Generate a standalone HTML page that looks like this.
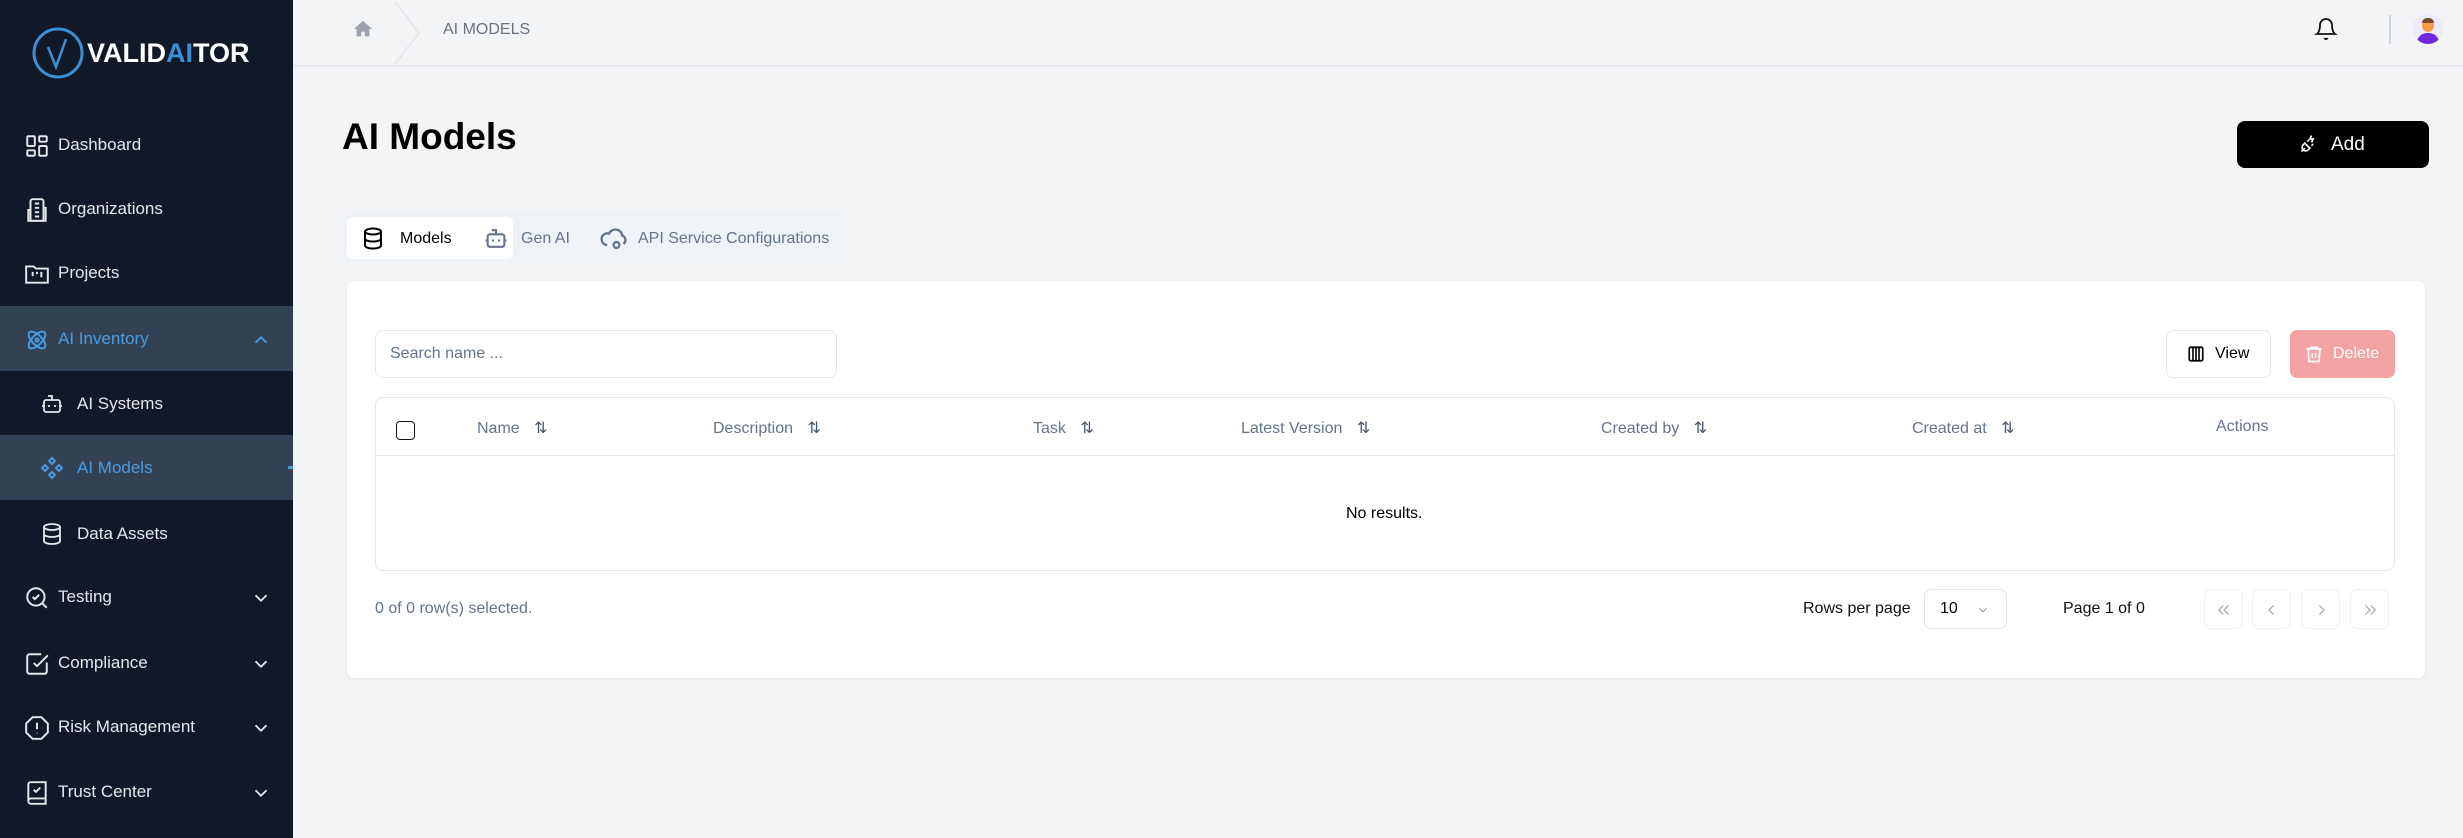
<!DOCTYPE html>
<html><head><meta charset="utf-8"><style>
*{box-sizing:border-box;margin:0;padding:0}
body{width:2463px;height:838px;overflow:hidden;background:#f3f4f6;font-family:"Liberation Sans",sans-serif;position:relative}
.a{position:absolute}
.side{left:0;top:0;width:293px;height:838px;background:#111827}
.nav{position:absolute;left:0;width:293px;height:64px;display:flex;align-items:center;color:#e5e7eb;font-size:17px}
.nav svg{position:absolute;left:24px;top:20px}
.nav span{position:absolute;left:58px}
.nav.sub svg{left:40px}
.nav.sub span{left:77px}
.nav .ch{left:250px;top:22px}
.txt{font-size:16px;color:#111}
.th{position:absolute;top:418px;font-size:16px;color:#64748b}
.pb{position:absolute;top:589px;width:39px;height:40px;border:1px solid #eef0f3;border-radius:7px}
.pb svg{position:absolute;left:10px;top:11px}
</style></head><body>
<div class="a side"></div>
<svg class="a" style="left:30px;top:25px" width="56" height="56" viewBox="0 0 56 56"><circle cx="28" cy="28" r="24" fill="none" stroke="#3b8fd4" stroke-width="3"/><path d="M18 22 L26 42 L36 14" fill="none" stroke="#3b8fd4" stroke-width="2.5"/></svg>
<div class="a" style="left:87px;top:38px;font-size:27px;font-weight:bold;color:#fff">VALID<span style="color:#3b8fd4">AI</span>TOR</div>

<div class="nav" style="top:113px"><svg width="26" height="26" viewBox="0 0 24 24" fill="none" stroke="#e5e7eb" stroke-width="1.8"><rect x="3" y="3" width="7" height="9" rx="1"/><rect x="14" y="3" width="7" height="5" rx="1"/><rect x="14" y="12" width="7" height="9" rx="1"/><rect x="3" y="16" width="7" height="5" rx="1"/></svg><span>Dashboard</span></div>
<div class="nav" style="top:177px"><svg width="26" height="26" viewBox="0 0 24 24" fill="none" stroke="#e5e7eb" stroke-width="1.8"><path d="M6 22V4a2 2 0 0 1 2-2h8a2 2 0 0 1 2 2v18Z"/><path d="M6 12H4v10h16V10h-2M10 6h4M10 10h4M10 14h4M10 18h4"/></svg><span>Organizations</span></div>
<div class="nav" style="top:241px"><svg width="26" height="26" viewBox="0 0 24 24" fill="none" stroke="#e5e7eb" stroke-width="1.8"><path d="M2 5h7l2 2h11v13H2Z"/><path d="M8 10v4M12 10v2M16 10v5"/></svg><span>Projects</span></div>
<div class="a" style="left:0;top:306px;width:293px;height:65px;background:#334155"></div>
<div class="nav" style="top:307px;color:#4a9ae0"><svg width="26" height="26" viewBox="0 0 24 24" fill="none" stroke="#4a9ae0" stroke-width="1.8"><circle cx="12" cy="12" r="1.5"/><ellipse cx="12" cy="12" rx="10" ry="4.5" transform="rotate(45 12 12)"/><ellipse cx="12" cy="12" rx="10" ry="4.5" transform="rotate(-45 12 12)"/></svg><span>AI Inventory</span><svg class="ch" width="22" height="22" viewBox="0 0 24 24" fill="none" stroke="#4a9ae0" stroke-width="2"><path d="M6 15l6-6 6 6"/></svg></div>
<div class="nav sub" style="top:372px"><svg width="24" height="24" viewBox="0 0 24 24" fill="none" stroke="#e5e7eb" stroke-width="1.8"><path d="M12 8V4H8"/><rect x="4" y="8" width="16" height="12" rx="2"/><path d="M2 14h2M20 14h2M9 13v2M15 13v2"/></svg><span>AI Systems</span></div>
<div class="a" style="left:0;top:435px;width:293px;height:65px;background:#334155"></div>
<div class="a" style="left:288px;top:466px;width:5px;height:3px;background:#4a9ae0"></div>
<div class="nav sub" style="top:436px;color:#4a9ae0"><svg width="24" height="24" viewBox="0 0 24 24" fill="none" stroke="#4a9ae0" stroke-width="2"><path d="M12 2l3 3-3 3-3-3ZM5 9l3 3-3 3-3-3ZM19 9l3 3-3 3-3-3ZM12 16l3 3-3 3-3-3Z"/></svg><span>AI Models</span></div>
<div class="nav sub" style="top:502px"><svg width="24" height="24" viewBox="0 0 24 24" fill="none" stroke="#e5e7eb" stroke-width="1.8"><ellipse cx="12" cy="5" rx="8" ry="3"/><path d="M4 5v14c0 1.7 3.6 3 8 3s8-1.3 8-3V5M4 12c0 1.7 3.6 3 8 3s8-1.3 8-3"/></svg><span>Data Assets</span></div>
<div class="nav" style="top:565px"><svg width="26" height="26" viewBox="0 0 24 24" fill="none" stroke="#e5e7eb" stroke-width="1.8"><circle cx="11" cy="11" r="8"/><path d="M21 21l-4.3-4.3M8 11l2 2 4-4"/></svg><span>Testing</span><svg class="ch" width="22" height="22" viewBox="0 0 24 24" fill="none" stroke="#e5e7eb" stroke-width="2"><path d="M6 9l6 6 6-6"/></svg></div>
<div class="nav" style="top:631px"><svg width="26" height="26" viewBox="0 0 24 24" fill="none" stroke="#e5e7eb" stroke-width="1.8"><path d="M21 10.5V19a2 2 0 0 1-2 2H5a2 2 0 0 1-2-2V5a2 2 0 0 1 2-2h11M9 11l3 3L22 4"/></svg><span>Compliance</span><svg class="ch" width="22" height="22" viewBox="0 0 24 24" fill="none" stroke="#e5e7eb" stroke-width="2"><path d="M6 9l6 6 6-6"/></svg></div>
<div class="nav" style="top:695px"><svg width="26" height="26" viewBox="0 0 24 24" fill="none" stroke="#e5e7eb" stroke-width="1.8"><path d="M7.9 2h8.2L22 7.9v8.2L16.1 22H7.9L2 16.1V7.9Z"/><path d="M12 7v6M12 16.5v.5"/></svg><span>Risk Management</span><svg class="ch" width="22" height="22" viewBox="0 0 24 24" fill="none" stroke="#e5e7eb" stroke-width="2"><path d="M6 9l6 6 6-6"/></svg></div>
<div class="nav" style="top:760px"><svg width="26" height="26" viewBox="0 0 24 24" fill="none" stroke="#e5e7eb" stroke-width="1.8"><path d="M4 19.5V4a2 2 0 0 1 2-2h14v20H6.5A2.5 2.5 0 0 1 4 19.5Zm0 0A2.5 2.5 0 0 1 6.5 17H20M9 9l2 2 4-4"/></svg><span>Trust Center</span><svg class="ch" width="22" height="22" viewBox="0 0 24 24" fill="none" stroke="#e5e7eb" stroke-width="2"><path d="M6 9l6 6 6-6"/></svg></div>

<div class="a" style="left:293px;top:0;width:2170px;height:66px;background:#f3f4f6;border-bottom:1px solid #e5e7eb;box-shadow:0 1px 3px rgba(0,0,0,.05)"></div>
<svg class="a" style="left:352px;top:18px" width="22" height="22" viewBox="0 0 24 24"><path d="M12 3L2 12h3v8h5v-5h4v5h5v-8h3Z" fill="#9ca3af"/></svg>
<svg class="a" style="left:393px;top:0" width="30" height="66"><path d="M2 2L26 33 2 64" fill="none" stroke="#e2e4e8" stroke-width="1.5"/></svg>
<div class="a" style="left:443px;top:21px;font-size:16px;color:#6b7280">AI MODELS</div>
<svg class="a" style="left:2314px;top:16px" width="24" height="26" viewBox="0 0 24 24" fill="none" stroke="#111" stroke-width="1.8"><path d="M6 8a6 6 0 0 1 12 0c0 7 3 9 3 9H3s3-2 3-9M10.3 21a1.9 1.9 0 0 0 3.4 0"/></svg>
<div class="a" style="left:2389px;top:15px;width:2px;height:29px;background:#d1d5db"></div>
<div class="a" style="left:2413px;top:14px;width:30px;height:30px;border-radius:50%;background:#ede9fe;overflow:hidden">
<div class="a" style="left:9px;top:5px;width:12px;height:13px;border-radius:50%;background:#f59e42"></div>
<div class="a" style="left:9px;top:4px;width:12px;height:5px;border-radius:6px 6px 0 0;background:#7c4a2d"></div>
<div class="a" style="left:4px;top:19px;width:22px;height:14px;border-radius:10px 10px 0 0;background:#6d28d9"></div></div>

<div class="a" style="left:342px;top:116px;font-size:37px;font-weight:bold;color:#000">AI Models</div>
<div class="a" style="left:2237px;top:121px;width:192px;height:47px;background:#000;border-radius:8px;color:#fff;font-size:19px;line-height:47px;padding-left:94px"><svg class="a" style="left:62px;top:13px" width="20" height="20" viewBox="0 0 24 24" fill="none" stroke="#fff" stroke-width="2"><path d="M3 21l4-4M7 11l6 6-2 2a4 4 0 0 1-6-6ZM10 9l2-2M15 14l2-2M15 2l-2 4h4l-2 4"/></svg>Add</div>

<div class="a" style="left:343px;top:213px;width:505px;height:50px;background:#eff2f6;border-radius:8px"></div>
<div class="a" style="left:347px;top:217px;width:166px;height:42px;background:#fff;border-radius:6px"></div>
<svg class="a" style="left:361px;top:226px" width="24" height="25" viewBox="0 0 24 24" fill="none" stroke="#000" stroke-width="2"><ellipse cx="12" cy="5" rx="8" ry="3"/><path d="M4 5v14c0 1.7 3.6 3 8 3s8-1.3 8-3V5M4 12c0 1.7 3.6 3 8 3s8-1.3 8-3"/></svg>
<div class="a txt" style="left:400px;top:230px;color:#000">Models</div>
<svg class="a" style="left:483px;top:226px" width="26" height="25" viewBox="0 0 24 24" fill="none" stroke="#64748b" stroke-width="2"><path d="M12 8V4H8"/><rect x="4" y="8" width="16" height="12" rx="2"/><path d="M2 14h2M20 14h2M9 13v2M15 13v2"/></svg>
<div class="a txt" style="left:521px;top:230px;color:#64748b">Gen AI</div>
<svg class="a" style="left:599px;top:224px" width="28" height="28" viewBox="0 0 24 24" fill="none" stroke="#64748b" stroke-width="2"><path d="M7 18a5 5 0 1 1 1.6-9.8A6 6 0 0 1 20 10a4 4 0 0 1 1 7"/><circle cx="15" cy="18" r="2.5"/></svg>
<div class="a txt" style="left:638px;top:230px;color:#64748b">API Service Configurations</div>

<div class="a" style="left:347px;top:281px;width:2078px;height:397px;background:#fff;border-radius:7px;box-shadow:0 1px 3px rgba(0,0,0,.08)"></div>
<div class="a" style="left:375px;top:330px;width:462px;height:48px;border:1px solid #e2e8f0;border-radius:8px;font-size:16px;color:#64748b;padding:14px 0 0 14px">Search name ...</div>
<div class="a" style="left:2166px;top:330px;width:105px;height:48px;border:1px solid #e2e8f0;border-radius:7px;font-size:16px;color:#000;line-height:46px;padding-left:48px"><svg class="a" style="left:20px;top:14px" width="18" height="18" viewBox="0 0 24 24" fill="none" stroke="#000" stroke-width="2.2"><rect x="3" y="3" width="18" height="18" rx="2"/><path d="M8 3v18M12 3v18M16 3v18"/></svg>View</div>
<div class="a" style="left:2290px;top:330px;width:105px;height:48px;background:#f4a3a3;border-radius:7px;font-size:16px;color:#fff;line-height:48px;padding-left:43px"><svg class="a" style="left:14px;top:14px" width="20" height="20" viewBox="0 0 24 24" fill="none" stroke="#fff" stroke-width="2"><path d="M3 6h18M8 6V4h8v2M5 6l1 15h12l1-15M10 11v6M14 11v6"/></svg>Delete</div>

<div class="a" style="left:375px;top:397px;width:2020px;height:174px;border:1px solid #e5e7eb;border-radius:8px"></div>
<div class="a" style="left:376px;top:455px;width:2018px;height:1px;background:#e5e7eb"></div>
<div class="a" style="left:396px;top:421px;width:19px;height:19px;border:1.5px solid #111;border-radius:4px"></div>
<div class="th" style="left:477px">Name <span style="margin-left:10px;color:#475569">⇅</span></div>
<div class="th" style="left:713px">Description <span style="margin-left:10px;color:#475569">⇅</span></div>
<div class="th" style="left:1033px">Task <span style="margin-left:10px;color:#475569">⇅</span></div>
<div class="th" style="left:1241px">Latest Version <span style="margin-left:10px;color:#475569">⇅</span></div>
<div class="th" style="left:1601px">Created by <span style="margin-left:10px;color:#475569">⇅</span></div>
<div class="th" style="left:1912px">Created at <span style="margin-left:10px;color:#475569">⇅</span></div>
<div class="th" style="left:2216px">Actions</div>
<div class="a txt" style="left:1346px;top:505px;color:#000">No results.</div>

<div class="a" style="left:375px;top:600px;font-size:16px;color:#64748b">0 of 0 row(s) selected.</div>
<div class="a txt" style="left:1803px;top:600px">Rows per page</div>
<div class="a" style="left:1924px;top:589px;width:83px;height:40px;border:1px solid #e2e8f0;border-radius:7px;font-size:16px;line-height:38px;padding-left:15px">10<svg class="a" style="left:51px;top:13px" width="14" height="14" viewBox="0 0 24 24" fill="none" stroke="#9ca3af" stroke-width="2"><path d="M6 9l6 6 6-6"/></svg></div>
<div class="a txt" style="left:2063px;top:600px">Page 1 of 0</div>
<div class="pb" style="left:2204px"><svg width="18" height="18" viewBox="0 0 24 24" fill="none" stroke="#9ca3af" stroke-width="1.6"><path d="M11 6l-6 6 6 6M18 6l-6 6 6 6"/></svg></div>
<div class="pb" style="left:2252px"><svg width="18" height="18" viewBox="0 0 24 24" fill="none" stroke="#9ca3af" stroke-width="1.6"><path d="M14 6l-6 6 6 6"/></svg></div>
<div class="pb" style="left:2301px"><svg width="18" height="18" viewBox="0 0 24 24" fill="none" stroke="#9ca3af" stroke-width="1.6"><path d="M10 6l6 6-6 6"/></svg></div>
<div class="pb" style="left:2350px"><svg width="18" height="18" viewBox="0 0 24 24" fill="none" stroke="#9ca3af" stroke-width="1.6"><path d="M6 6l6 6-6 6M13 6l6 6-6 6"/></svg></div>
</body></html>
